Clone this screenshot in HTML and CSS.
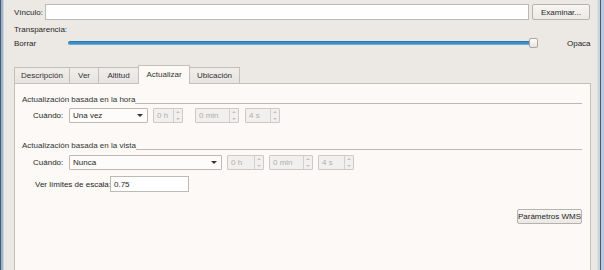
FILE: index.html
```html
<!DOCTYPE html>
<html>
<head>
<meta charset="utf-8">
<link rel="stylesheet" href="styles.css">
</head>
<body>
<div class="window">
  <div class="frame-left"></div>
  <div class="content">
    <div class="row link-row">
      <span class="lbl vinc">Vínculo:</span>
      <div class="input link-input"></div>
      <div class="btn examinar">Examinar...</div>
    </div>
    <div class="row trans-row"><span class="lbl">Transparencia:</span></div>
    <div class="row slider-row">
      <span class="lbl borrar">Borrar</span>
      <div class="slider">
        <div class="track"></div>
        <div class="handle"></div>
      </div>
      <span class="lbl opaca">Opaca</span>
    </div>
    <div class="tabs">
      <div class="tab t-desc">Descripción</div>
      <div class="tab t-ver">Ver</div>
      <div class="tab t-alt">Altitud</div>
      <div class="tab t-act active">Actualizar</div>
      <div class="tab t-ubi">Ubicación</div>
    </div>
    <div class="pane">
      <div class="group-title"><span>Actualización basada en la hora</span><div class="gline"></div></div>
      <div class="frow r1">
        <span class="lbl cuando">Cuándo:</span>
        <div class="combo c1"><span>Una vez</span><span class="arrow"></span></div>
        <div class="spin s-h1"><span>0 h</span><div class="sbtn"><i class="up"></i><i class="dn"></i></div></div>
        <div class="spin s-m1"><span>0 min</span><div class="sbtn"><i class="up"></i><i class="dn"></i></div></div>
        <div class="spin s-s1"><span>4 s</span><div class="sbtn"><i class="up"></i><i class="dn"></i></div></div>
      </div>
      <div class="group-title g2"><span>Actualización basada en la vista</span><div class="gline"></div></div>
      <div class="frow r2">
        <span class="lbl cuando">Cuándo:</span>
        <div class="combo c2"><span>Nunca</span><span class="arrow"></span></div>
        <div class="spin s-h2"><span>0 h</span><div class="sbtn"><i class="up"></i><i class="dn"></i></div></div>
        <div class="spin s-m2"><span>0 min</span><div class="sbtn"><i class="up"></i><i class="dn"></i></div></div>
        <div class="spin s-s2"><span>4 s</span><div class="sbtn"><i class="up"></i><i class="dn"></i></div></div>
      </div>
      <div class="frow r3">
        <span class="lbl limites">Ver límites de escala:</span>
        <div class="input scale-input">0.75</div>
      </div>
      <div class="frow r4">
        <div class="btn wms">Parámetros WMS</div>
      </div>
    </div>
  </div>
  <div class="frame-right"></div>
</div>
</body>
</html>
```

FILE: styles.css
```css
* { box-sizing: border-box; }
html, body { margin: 0; padding: 0; }
body {
  width: 604px;
  height: 270px;
  overflow: hidden;
  font-family: "Liberation Sans", Arial, sans-serif;
  font-size: 8px;
  color: #262626;
  background: #ece9e5;
}
.window {
  display: flex;
  height: 270px;
}
.frame-left {
  width: 4px;
  flex: none;
  background: linear-gradient(to right, #4d5a69 0, #4d5a69 1px, #9db4cc 1px, #9db4cc 3px, #c9d6e3 3px, #c9d6e3 4px);
}
.frame-right {
  width: 7px;
  flex: none;
  background: linear-gradient(to right, #e0ddd9 0, #e0ddd9 1px, #c7d4e2 1px, #c7d4e2 3px, #4e5a68 3px, #4e5a68 4px, #b8cbe0 4px, #b8cbe0 7px);
}
.content {
  flex: 1;
  padding: 4px 3px 0 10px;
  display: flex;
  flex-direction: column;
  background: #ece9e5;
}
.row { display: flex; align-items: center; }
.lbl { white-space: nowrap; flex: none; }
.link-row { height: 16px; }
.vinc { width: 31px; }
.input {
  background: #fffefe;
  border: 1px solid #bdb9b5;
  height: 16px;
  flex: none;
}
.link-input { width: 484px; }
.btn {
  border: 1px solid #b6b2ae;
  background: linear-gradient(#f8f6f4, #ebe8e5);
  border-radius: 2px;
  display: flex;
  align-items: center;
  justify-content: center;
  color: #262626;
  white-space: nowrap;
  flex: none;
}
.examinar { width: 58px; height: 16px; margin-left: 3px; }
.trans-row { height: 12px; margin-top: 3px; }
.slider-row { height: 14px; margin-top: 1px; }
.borrar { width: 54px; }
.slider { position: relative; width: 470px; height: 14px; flex: none; }
.track {
  position: absolute;
  left: 0; right: 4px; top: 5px;
  height: 4px;
  border-radius: 2px;
  background: #3e8fc6;
  border-top: 1px solid #2d76a9;
  border-bottom: 1px solid #6cabd8;
}
.handle {
  position: absolute;
  right: 0; top: 2px;
  width: 9px; height: 10px;
  background: linear-gradient(#ffffff, #e6e3e0);
  border: 1px solid #a9a5a1;
  border-radius: 2px;
}
.opaca { margin-left: 29px; }
.tabs {
  display: flex;
  align-items: flex-end;
  height: 18px;
  margin-top: 15px;
  position: relative;
  z-index: 1;
}
.tab {
  height: 16px;
  border: 1px solid #c3bfbb;
  border-bottom: none;
  border-left: none;
  background: linear-gradient(#f0edea, #e7e4e1);
  display: flex;
  align-items: center;
  justify-content: center;
  color: #333;
  white-space: nowrap;
}
.t-desc { width: 56px; border-left: 1px solid #c3bfbb; }
.t-ver { width: 29px; }
.t-alt { width: 40px; }
.t-act {
  width: 52px;
  height: 19px;
  background: #fcf9f6;
  border-left: 1px solid #c3bfbb;
  margin-left: -1px;
  margin-bottom: -1px;
  padding-bottom: 2px;
}
.t-ubi { width: 50px; }
.pane {
  flex: 1;
  width: 577px;
  background: #fcf9f6;
  border: 1px solid #c3bfbb;
  border-bottom: none;
  padding: 11px 8px 0 7px;
  display: flex;
  flex-direction: column;
}
.group-title {
  display: flex;
  align-items: flex-end;
  height: 10px;
  color: #333;
}
.group-title span { white-space: nowrap; line-height: 10px; }
.gline {
  flex: 1;
  height: 1px;
  border-top: 1px solid #bcb8b4;
  margin-bottom: 1px;
}
.g2 { margin-top: 18px; }
.frow { display: flex; align-items: center; height: 15px; }
.r1 { margin-top: 3px; }
.r2 { margin-top: 4px; }
.r3 { margin-top: 6px; height: 16px; }
.r4 { margin-top: 16px; justify-content: flex-end; height: 16px; }
.cuando { margin-left: 11px; width: 36px; }
.limites { margin-left: 13px; width: 75px; }
.combo {
  height: 15px;
  border: 1px solid #bdb9b5;
  background: #fdfcfb;
  border-radius: 1px;
  display: flex;
  align-items: center;
  justify-content: space-between;
  padding: 0 4px 0 3px;
  flex: none;
}
.arrow {
  width: 0; height: 0;
  border-left: 3px solid transparent;
  border-right: 3px solid transparent;
  border-top: 3px solid #333;
}
.c1 { width: 79px; }
.c2 { width: 153px; }
.spin {
  height: 15px;
  border: 1px solid #ccc9c6;
  background: #f2f0ee;
  border-radius: 1px;
  display: flex;
  align-items: center;
  justify-content: space-between;
  color: #b0adaa;
  padding-left: 3px;
  flex: none;
}
.sbtn {
  width: 9px;
  height: 13px;
  border-left: 1px solid #d2cfcc;
  display: flex;
  flex-direction: column;
  align-items: center;
  justify-content: space-around;
}
.sbtn i {
  display: block;
  width: 0; height: 0;
  border-left: 2px solid transparent;
  border-right: 2px solid transparent;
}
.sbtn .up { border-bottom: 2px solid #c4c1be; }
.sbtn .dn { border-top: 2px solid #c4c1be; }
.s-h1 { width: 30px; margin-left: 5px; }
.s-m1 { width: 44px; margin-left: 12px; }
.s-s1 { width: 35px; margin-left: 6px; }
.s-h2 { width: 37px; margin-left: 5px; }
.s-m2 { width: 44px; margin-left: 5px; }
.s-s2 { width: 36px; margin-left: 5px; }
.scale-input { width: 79px; display: flex; align-items: center; padding-left: 3px; }
.wms { width: 65px; height: 15px; margin-right: 0; }
```
